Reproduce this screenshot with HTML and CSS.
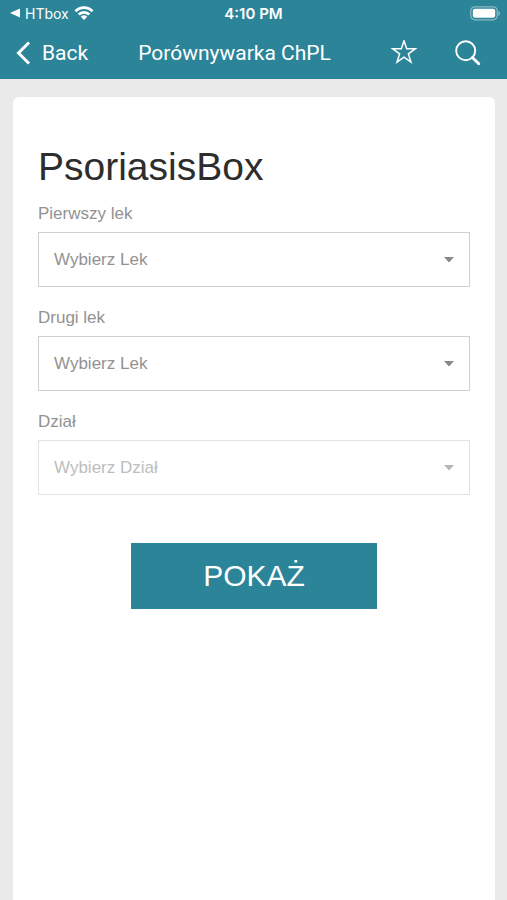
FILE: index.html
```html
<!DOCTYPE html>
<html lang="pl">
<head>
<meta charset="utf-8">
<meta name="viewport" content="width=device-width, initial-scale=1">
<title>Porównywarka ChPL</title>
<link rel="stylesheet" href="styles.css">
</head>
<body>
<header class="top">
  <div class="status">
    <a class="return" href="#">
      <svg width="10" height="10" viewBox="0 0 10 10"><path d="M0 5 10 .5v9z" fill="currentColor"/></svg>
      <span>HTbox</span>
      <svg width="20" height="14" viewBox="0 0 20 14" fill="none" stroke="currentColor" stroke-width="2.800"><path d="M1.500 5.200C6.300.3 13.700.3 18.500 5.200M4.700 8.600c3-3 7.600-3 10.600 0"/><path d="M6.800 10.700c1.800-1.800 4.600-1.800 6.400 0L10 13.900z" fill="currentColor" stroke="none"/></svg>
    </a>
    <span class="time">4:10 PM</span>
    <svg class="battery" width="31" height="15" viewBox="0 0 31 15"><rect x=".8" y=".8" width="26.400" height="13" rx="4" fill="none" stroke="#fff" stroke-opacity=".45" stroke-width="1.200"/><rect x="2.800" y="2.800" width="22.400" height="9" rx="2" fill="#fff"/><path d="M28.500 5v5c1.800-.6 1.800-4.400 0-5z" fill="#fff" fill-opacity=".5"/></svg>
  </div>
  <nav class="bar">
    <a class="back" href="#">
      <svg width="15" height="24" viewBox="0 0 15 24" fill="none" stroke="currentColor" stroke-width="3"><path d="M13 1.500 2.500 12 13 22.500"/></svg>
      <span>Back</span>
    </a>
    <h1 class="bar-title">Porównywarka ChPL</h1>
    <div class="actions">
      <button class="icon" type="button" aria-label="Ulubione"><svg width="26" height="26" viewBox="0 0 26 26" fill="none" stroke="currentColor" stroke-width="1.500"><path d="M13 .8 15.700 8.800H24.200L17.400 13.900 20 22.200 13 17.200 6 22.200 8.600 13.900 1.800 8.800H10.300z"/></svg></button>
      <button class="icon" type="button" aria-label="Szukaj"><svg width="26" height="26" viewBox="0 0 26 26" fill="none" stroke="currentColor"><circle cx="10.700" cy="10.700" r="9.500" stroke-width="1.900"/><path d="m17.400 17.400 6.400 6.400" stroke-width="2.800" stroke-linecap="round"/></svg></button>
    </div>
  </nav>
</header>
<main class="card">
  <h2 class="heading">PsoriasisBox</h2>
  <form class="form">
    <div class="field">
      <label for="first">Pierwszy lek</label>
      <select id="first"><option>Wybierz Lek</option></select>
    </div>
    <div class="field">
      <label for="second">Drugi lek</label>
      <select id="second"><option>Wybierz Lek</option></select>
    </div>
    <div class="field">
      <label for="section">Dział</label>
      <select id="section" disabled><option>Wybierz Dział</option></select>
    </div>
    <button class="submit" type="button">POKAŻ</button>
  </form>
</main>
</body>
</html>
```
FILE: styles.css
```css
* { box-sizing: border-box; }

body {
  margin: 0;
  min-height: 100vh;
  display: flex;
  flex-direction: column;
  background: #eaeaea;
  font-family: "Liberation Sans", Arial, sans-serif;
}

.top {
  background: #2c8498;
  color: #fff;
  font-family: Inter, Roboto, sans-serif;
}

.top a { color: inherit; text-decoration: none; }
.top svg { display: block; }

.status {
  height: 28px;
  display: grid;
  grid-template-columns: 1fr auto 1fr;
  align-items: center;
  padding: 0 6px 2px;
  font-size: 14px;
}

.return { display: flex; align-items: center; gap: 5px; padding-left: 4px; }
.time { font-size: 15px; font-weight: 600; }
.battery { justify-self: end; }

.bar {
  height: 51px;
  display: flex;
  align-items: center;
  padding: 0 26px 2px 16px;
  font-family: Roboto, Inter, sans-serif;
  font-size: 21px;
}

.back { display: flex; align-items: center; gap: 11px; }

.bar-title {
  flex: 1;
  margin: 0;
  padding-right: 10px;
  text-align: center;
  font-size: 21px;
  font-weight: 400;
  white-space: nowrap;
}

.actions { display: flex; gap: 38px; }

.icon {
  border: 0;
  padding: 0;
  background: none;
  color: inherit;
}

.card {
  flex: 1;
  margin: 18px 12px 0 13px;
  padding: 48px 25px;
  border-radius: 6px 6px 0 0;
  background: #fff;
}

.heading {
  margin: 0 0 15px;
  font-size: 39px;
  line-height: 44px;
  font-weight: 400;
  color: #2d2d2d;
}

.form { display: flex; flex-direction: column; gap: 21px; }

.field {
  display: flex;
  flex-direction: column;
  gap: 8px;
  color: #929292;
  font-size: 17px;
  line-height: 20px;
}

.field select {
  height: 55px;
  padding: 0 40px 0 15px;
  border: 1px solid #ccd2d4;
  border-radius: 0;
  appearance: none;
  background: url("data:image/svg+xml,%3Csvg xmlns='http://www.w3.org/2000/svg' viewBox='0 0 10 6'%3E%3Cpath d='M0 0h10L5 5.500z' fill='%23888'/%3E%3C/svg%3E") right 15px center / 10px 6px no-repeat #fff;
  color: inherit;
  font: inherit;
}

.field select:disabled { opacity: .6; }

.submit {
  align-self: center;
  width: 57%;
  height: 66px;
  margin-top: 27px;
  border: 0;
  background: #2c8498;
  color: #fff;
  font: 30px "Liberation Sans", Arial, sans-serif;
}
```
